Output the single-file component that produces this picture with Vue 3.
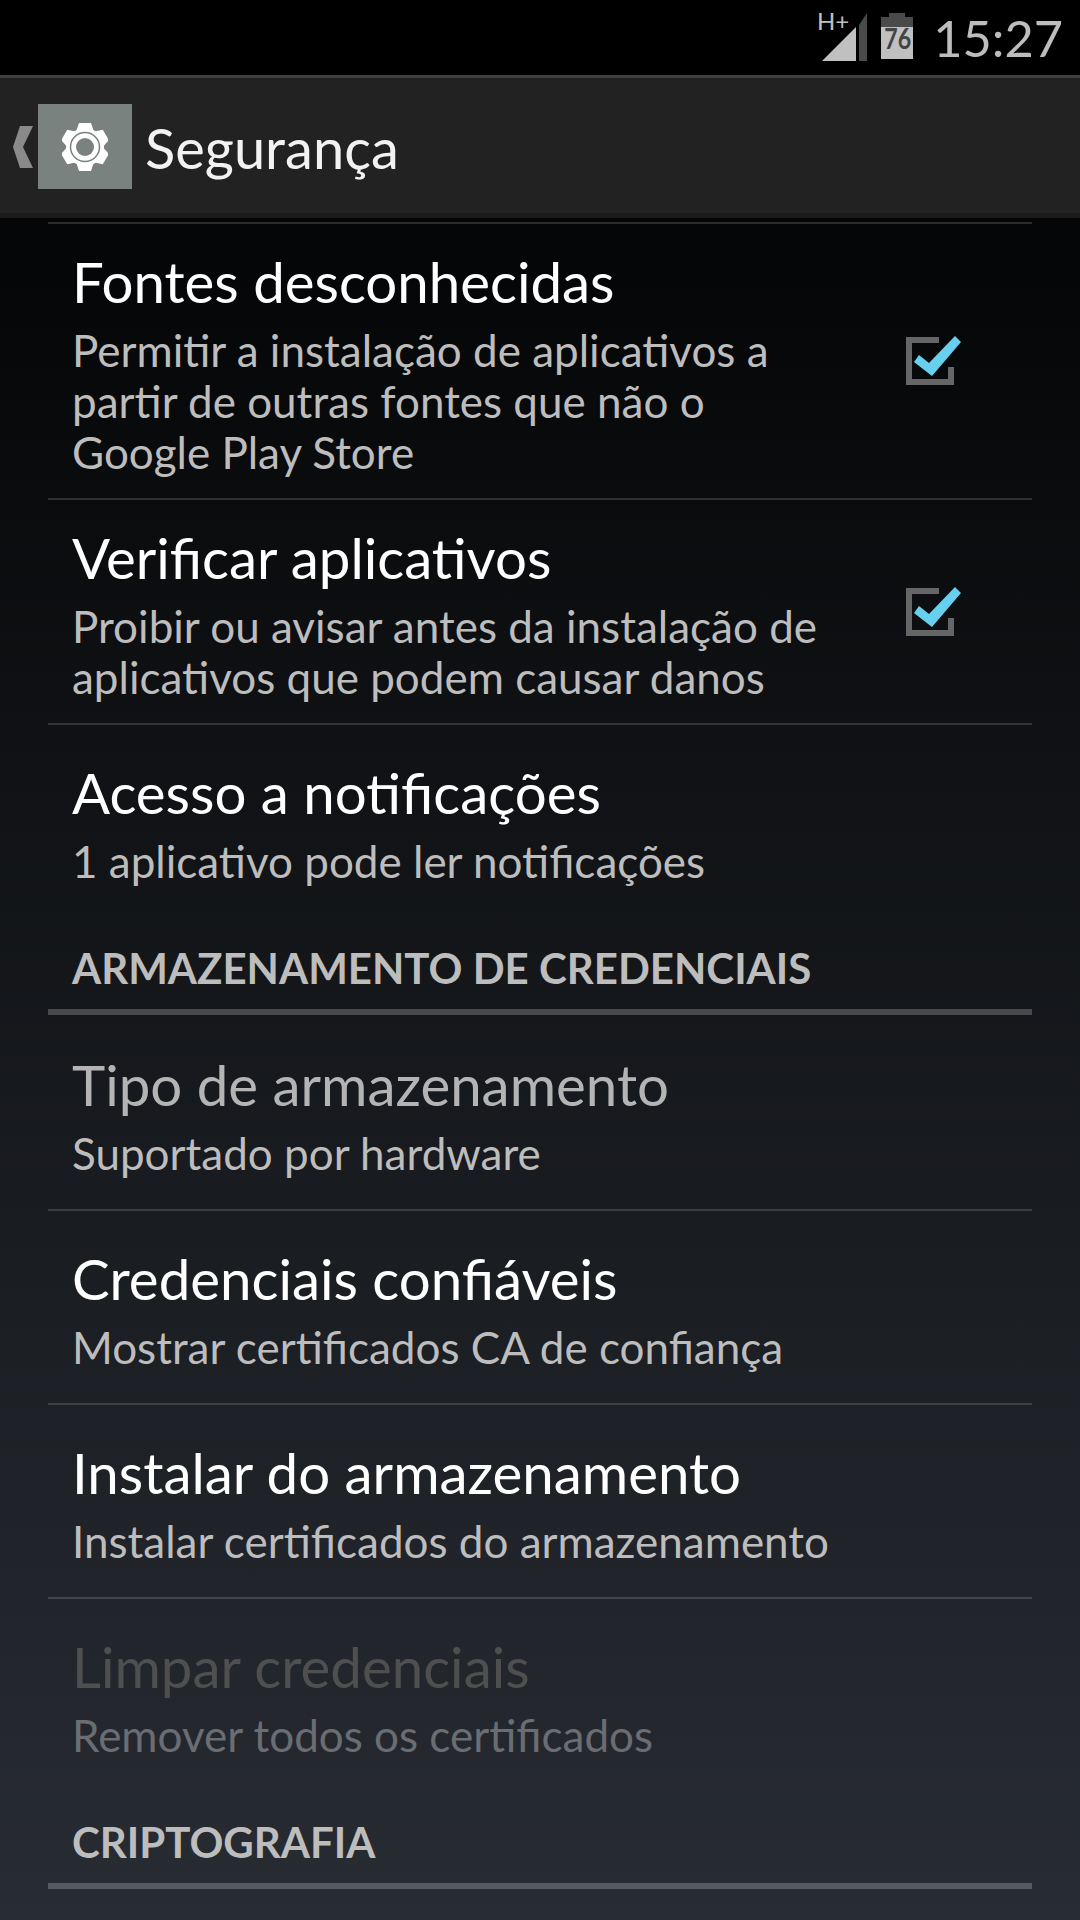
<template>
  <div class="screen">
    <div class="statusbar">
      <svg class="signal" width="50" height="56" viewBox="0 0 50 56">
        <text x="0" y="24" class="hplus">H+</text>
        <path d="M5 55 L39 21 V55 Z" fill="#c0c0c0" />
        <path d="M42 55 V19 L50 7 V55 Z" fill="#4a4a4a" />
      </svg>
      <div class="battery">
        <div class="battery-cap"></div>
        <div class="battery-body"><span class="battery-level"></span><span class="battery-num">76</span></div>
      </div>
      <span class="clock">15:27</span>
    </div>
    <div class="actionbar">
      <svg class="back" width="20" height="42" viewBox="0 0 20 42"><path d="M7 0 H20 L10 21 L20 42 H7 L0 21 Z" fill="#8a8a8a" /></svg>
      <div class="appicon">
        <svg width="46" height="48" viewBox="0 0 46 48">
          <polygon v-for="a in [0, 60, 120, 180, 240, 300]" :key="a" points="14,9 17,0 29,0 32,9" fill="#fff" :transform="`rotate(${a} 23 24)`" />
          <circle cx="23" cy="24" r="19" fill="#fff" />
          <circle cx="23" cy="24" r="14.5" fill="none" stroke="#7a8280" stroke-width="1.5" />
          <circle cx="23" cy="24" r="9" fill="#7a8280" />
        </svg>
      </div>
      <span class="title">Segurança</span>
    </div>
    <div class="barshadow"></div>
    <div class="list">
      <template v-for="item in items" :key="item.title">
        <div v-if="item.header" class="header">{{ item.title }}</div>
        <div v-else class="row" :class="[item.state, { last: item.last }]">
          <div class="text">
            <div class="row-title">{{ item.title }}</div>
            <div class="row-sub" v-for="line in item.sub" :key="line">{{ line }}</div>
          </div>
          <svg v-if="item.check" class="check" width="56" height="52" viewBox="0 0 56 52">
            <path d="M0 2 H33 V8 H6 V44 H42 V32 H48 V50 H0 Z" fill="#666" />
            <path d="M8 27 L13 20 L23 28 L49 1 L55 7 L26 41 Z" fill="#67d0ee" />
          </svg>
        </div>
      </template>
    </div>
  </div>
</template>

<script setup>
const items = [
  { title: 'Fontes desconhecidas', sub: ['Permitir a instalação de aplicativos a', 'partir de outras fontes que não o', 'Google Play Store'], check: true },
  { title: 'Verificar aplicativos', sub: ['Proibir ou avisar antes da instalação de', 'aplicativos que podem causar danos'], check: true },
  { title: 'Acesso a notificações', sub: ['1 aplicativo pode ler notificações'], last: true },
  { title: 'ARMAZENAMENTO DE CREDENCIAIS', header: true },
  { title: 'Tipo de armazenamento', sub: ['Suportado por hardware'], state: 'muted' },
  { title: 'Credenciais confiáveis', sub: ['Mostrar certificados CA de confiança'] },
  { title: 'Instalar do armazenamento', sub: ['Instalar certificados do armazenamento'] },
  { title: 'Limpar credenciais', sub: ['Remover todos os certificados'], state: 'disabled', last: true },
  { title: 'CRIPTOGRAFIA', header: true },
]
</script>

<style>
html, body { background: #000; }
</style>

<style scoped>
.screen {
  width: 1080px;
  height: 1920px;
  overflow: hidden;
  font-family: Lato, "Open Sans", sans-serif;
  background: linear-gradient(#040506 210px, #282c33 1920px);
}

.statusbar {
  height: 75px;
  background: #000;
  display: flex;
  align-items: flex-start;
  justify-content: flex-end;
  padding-right: 17px;
  box-sizing: border-box;
}

.signal {
  margin-top: 6px;
  margin-right: 14px;
}

.hplus {
  font: 400 24px Lato, sans-serif;
  fill: #c0c0c0;
}

.battery {
  width: 32px;
  margin-top: 13px;
  margin-right: 20px;
  display: flex;
  flex-direction: column;
  align-items: center;
}

.battery-cap {
  width: 16px;
  height: 4px;
  background: #4a4a4a;
}

.battery-body {
  position: relative;
  width: 32px;
  height: 42px;
  background: #4a4a4a;
}

.battery-level {
  position: absolute;
  left: 0;
  right: 0;
  bottom: 0;
  height: 32px;
  background: #c0c0c0;
}

.battery-num {
  position: absolute;
  left: 0;
  right: 0;
  top: 6px;
  text-align: center;
  font-size: 29px;
  line-height: 30px;
  font-weight: 700;
  color: #444;
  transform: scaleX(0.8);
}

.clock {
  font-size: 50.5px;
  line-height: 75px;
  color: #bdbdbd;
}

.actionbar {
  height: 138px;
  box-sizing: border-box;
  border-top: 3px solid #3f3f3f;
  padding-top: 2px;
  background: #222;
  display: flex;
  align-items: center;
  padding-left: 13px;
}

.back {
  margin-top: 1px;
}

.appicon {
  width: 94px;
  height: 85px;
  margin-left: 5px;
  background: #7a8280;
  display: flex;
  align-items: center;
  justify-content: center;
}

.title {
  margin-left: 13px;
  margin-top: 2px;
  font-size: 56px;
  color: #f2f2f2;
}

.barshadow {
  height: 5px;
  background: #1b1b1b;
}

.list {
  margin: 4px 48px 0;
  border-top: 2px solid rgba(255, 255, 255, 0.15);
}

.row {
  box-sizing: border-box;
  min-height: 194px;
  display: flex;
  align-items: center;
  justify-content: space-between;
  padding: 0 24px;
  border-bottom: 2px solid rgba(255, 255, 255, 0.15);
}

.row.last {
  min-height: 192px;
  border-bottom: 0;
}

.text {
  padding: 25px 0 20px;
}

.row-title {
  font-size: 56.4px;
  line-height: 64px;
  color: #fff;
  margin-bottom: 12px;
}

.row-sub {
  font-size: 44px;
  line-height: 51px;
  color: #bdbdbd;
}

.row.muted .row-title { color: #b4b4b4; }
.row.disabled .row-title { color: #4f4f4f; }
.row.disabled .row-sub { color: #6a6d72; }

.check {
  margin-right: 46px;
  flex: none;
}

.header {
  height: 98px;
  box-sizing: border-box;
  margin-bottom: 2px;
  padding: 26px 24px 0;
  border-bottom: 6px solid rgba(255, 255, 255, 0.22);
  font-size: 42px;
  line-height: 50px;
  font-weight: 700;
  color: #bdbdbd;
}
</style>
